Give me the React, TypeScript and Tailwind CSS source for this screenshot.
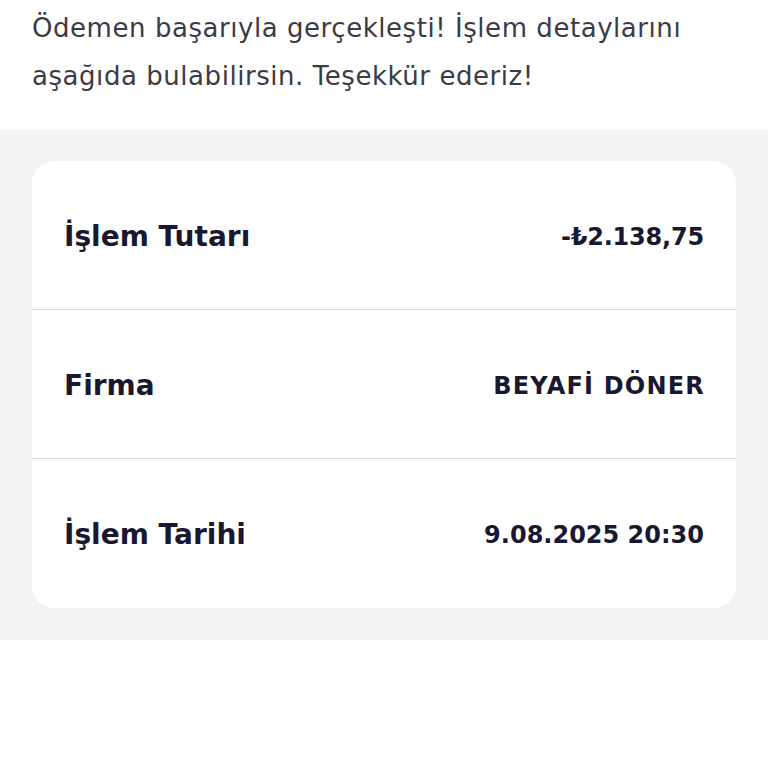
import React from "react";

const rows = [
  { label: "İşlem Tutarı", value: "-₺2.138,75", vt: "tracking-[-0.2px]" },
  { label: "Firma", value: "BEYAFİ DÖNER", vt: "tracking-[1.2px] mr-[-1px]" },
  { label: "İşlem Tarihi", value: "9.08.2025 20:30", vt: "tracking-[0px]" },
];

export default function App() {
  return (
    <div className="w-[768px] h-[768px] bg-white" style={{ fontFamily: '"DejaVu Sans", "Open Sans", sans-serif' }}>
      <div className="px-8 pt-[4px] h-[130px]">
        <p className="text-[26px] leading-[48px] text-[#3b3b46] tracking-[0.55px]">
          Ödemen başarıyla gerçekleşti! İşlem detaylarını
          <br />
          aşağıda bulabilirsin. Teşekkür ederiz!
        </p>
      </div>
      <div className="bg-[#f3f3f6] px-8 pt-[31px] pb-[32px]">
        <div className="bg-white rounded-[22px] overflow-hidden">
          {rows.map((r, i) => (
            <div
              key={r.label}
              className={`flex items-center justify-between px-8 pt-[3px] h-[149px] ${i < rows.length - 1 ? "border-b border-[#d9d9de]" : ""}`}
            >
              <span className="text-[28px] font-bold text-[#1a1830]">{r.label}</span>
              <span className={`text-[24px] font-bold text-[#1a1830] ${r.vt}`}>{r.value}</span>
            </div>
          ))}
        </div>
      </div>
    </div>
  );
}
